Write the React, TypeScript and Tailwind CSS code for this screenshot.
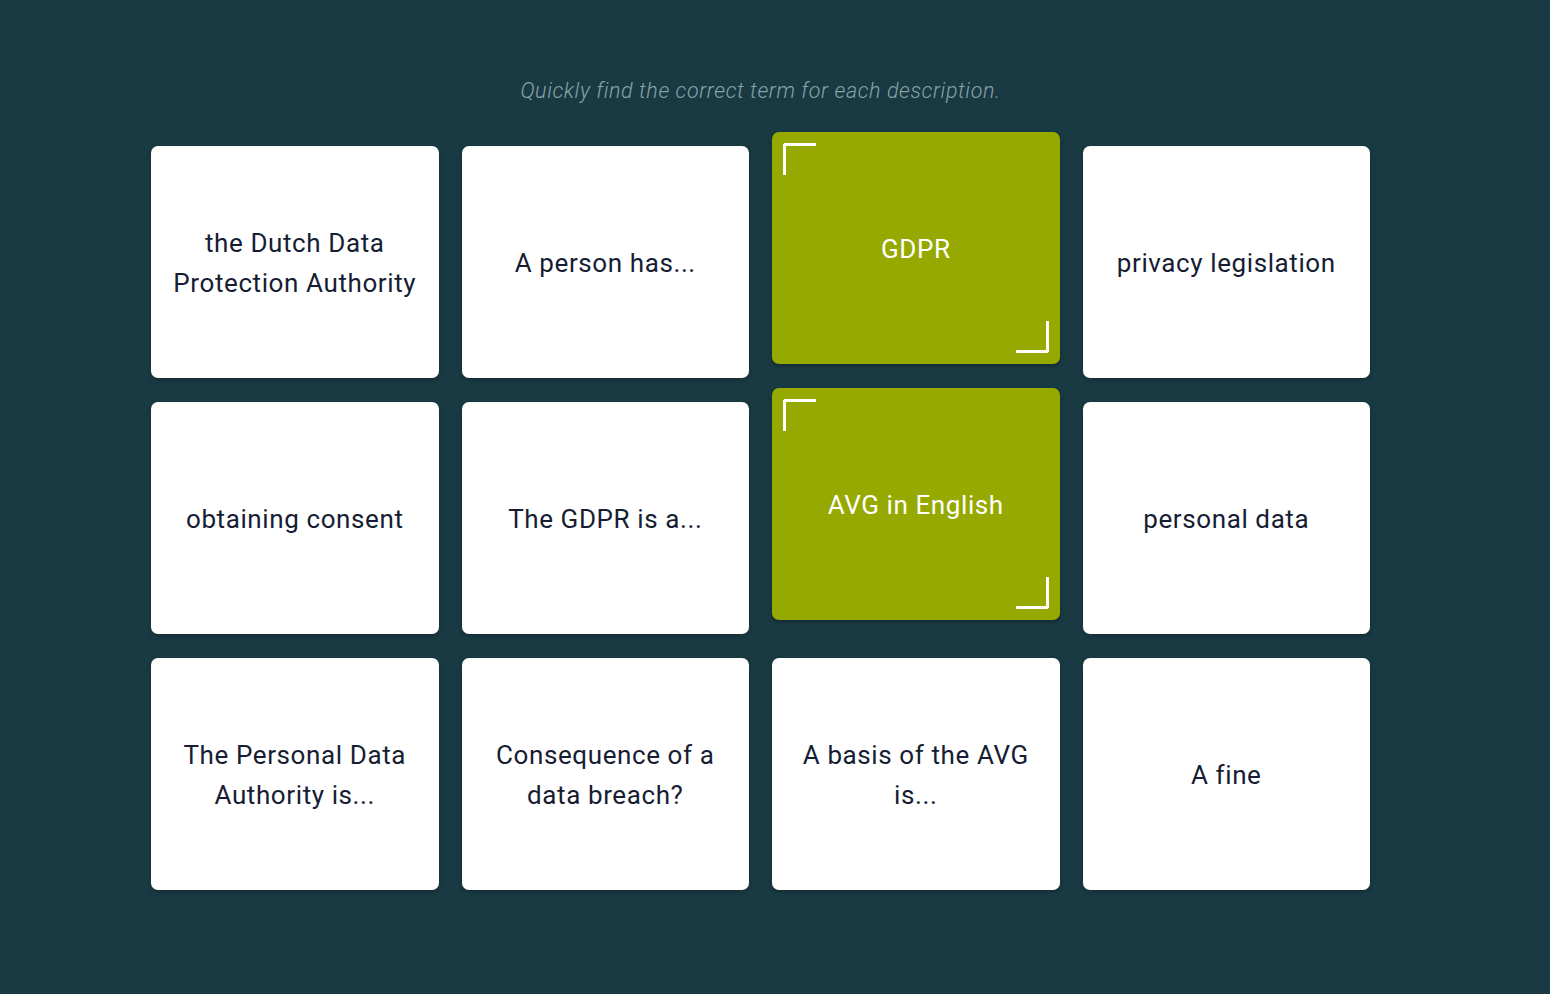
import { Fragment } from "react";

type Card = { text: string; picked?: boolean };

const CARDS: Card[] = [
  { text: "the Dutch Data Protection Authority" },
  { text: "A person has..." },
  { text: "GDPR", picked: true },
  { text: "privacy legislation" },
  { text: "obtaining consent" },
  { text: "The GDPR is a..." },
  { text: "AVG in English", picked: true },
  { text: "personal data" },
  { text: "The Personal Data Authority is..." },
  { text: "Consequence of a data breach?" },
  { text: "A basis of the AVG is..." },
  { text: "A fine" },
];

function Corners() {
  return (
    <Fragment>
      <span className="absolute left-[11px] top-[11px] w-[33px] h-[32px] border-l-[3px] border-t-[3px] border-white rounded-tl-[3px]" />
      <span className="absolute right-[11px] bottom-[11px] w-[33px] h-[32px] border-r-[3px] border-b-[3px] border-white rounded-br-[3px]" />
    </Fragment>
  );
}

function MatchCard({ card }: { card: Card }) {
  if (card.picked) {
    return (
      <div className="relative -translate-y-[14px] h-[232px] rounded-[7px] bg-[#95a900] shadow-[0_2px_4px_rgba(0,0,0,0.25)] flex items-center justify-center px-6 pt-[2px] text-center text-white text-[26px] leading-[40px] tracking-[0.6px]">
        <Corners />
        {card.text}
      </div>
    );
  }
  return (
    <div className="h-[232px] rounded-[7px] bg-white shadow-[0_2px_4px_rgba(0,0,0,0.25)] flex items-center justify-center px-5 pt-[2px] text-center text-[#161d33] text-[26px] leading-[40px] tracking-[0.6px]">
      {card.text}
    </div>
  );
}

export default function App() {
  return (
    <div className="min-h-[994px] w-full bg-[#193a42] font-['Roboto',sans-serif]">
      <div className="pt-[77px] pr-[29px] text-center italic font-light text-[21.5px] leading-[28px] text-[#86a3a8] tracking-[0.6px]">
        Quickly find the correct term for each description.
      </div>
      <div className="mt-[41px] ml-[151px] w-[1219px] grid grid-cols-4 gap-x-[23px] gap-y-[24px]">
        {CARDS.map((c) => (
          <MatchCard key={c.text} card={c} />
        ))}
      </div>
    </div>
  );
}
